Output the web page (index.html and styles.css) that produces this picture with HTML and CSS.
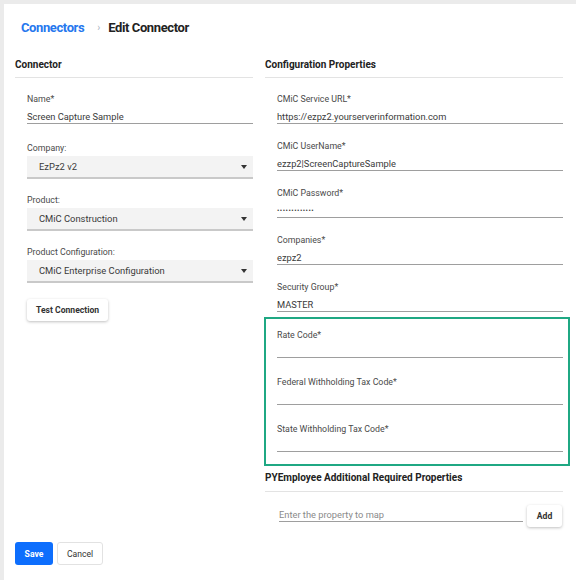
FILE: index.html
```html
<!DOCTYPE html>
<html lang="en">
<head>
  <meta charset="UTF-8" />
  <title>Edit Connector</title>
  <link rel="stylesheet" href="styles.css">
</head>
<body>
  <div class="page">

    <div class="crumbs">
      <a class="crumb-link" href="#">Connectors</a>
      <span class="crumb-sep">&rsaquo;</span>
      <span class="crumb-current">Edit Connector</span>
    </div>

    <div class="columns">
      <!-- Connector -->
      <section class="col col-left">
        <h4 class="section-title">Connector</h4>
        <div class="fields">
          <div class="field">
            <div class="label">Name*</div>
            <div class="value">Screen Capture Sample</div>
          </div>
          <div class="field">
            <div class="label">Company:</div>
            <div class="select">EzPz2 v2<span class="caret"></span></div>
          </div>
          <div class="field">
            <div class="label">Product:</div>
            <div class="select">CMiC Construction<span class="caret"></span></div>
          </div>
          <div class="field">
            <div class="label">Product Configuration:</div>
            <div class="select">CMiC Enterprise Configuration<span class="caret"></span></div>
          </div>
          <button class="btn btn-raised">Test Connection</button>
        </div>
      </section>

      <!-- Configuration Properties -->
      <section class="col col-right">
        <h4 class="section-title">Configuration Properties</h4>
        <div class="fields">
          <div class="field">
            <div class="label">CMiC Service URL*</div>
            <div class="value">https://ezpz2.yourserverinformation.com</div>
          </div>
          <div class="field">
            <div class="label">CMiC UserName*</div>
            <div class="value">ezzp2|ScreenCaptureSample</div>
          </div>
          <div class="field">
            <div class="label">CMiC Password*</div>
            <div class="value dots">&bull;&bull;&bull;&bull;&bull;&bull;&bull;&bull;&bull;&bull;&bull;&bull;&bull;</div>
          </div>
          <div class="field">
            <div class="label">Companies*</div>
            <div class="value">ezpz2</div>
          </div>
          <div class="field">
            <div class="label">Security Group*</div>
            <div class="value">MASTER</div>
          </div>

          <div class="highlight">
            <div class="field">
              <div class="label">Rate Code*</div>
              <div class="value"></div>
            </div>
            <div class="field">
              <div class="label">Federal Withholding Tax Code*</div>
              <div class="value"></div>
            </div>
            <div class="field">
              <div class="label">State Withholding Tax Code*</div>
              <div class="value"></div>
            </div>
          </div>
        </div>

        <h4 class="section-title extra-title">PYEmployee Additional Required Properties</h4>
        <div class="add-row">
          <div class="value placeholder">Enter the property to map</div>
          <button class="btn btn-raised btn-add">Add</button>
        </div>
      </section>
    </div>

    <div class="actions">
      <button class="btn btn-primary">Save</button>
      <button class="btn btn-outline">Cancel</button>
    </div>

  </div>
</body>
</html>
```

FILE: styles.css
```css
html, body {
  margin: 0;
  padding: 0;
}

body {
  background-color: #ebebeb;
  font-family: Roboto, "Liberation Sans", Arial, sans-serif;
  color: #333;
}

.page {
  margin: 4px 0 0 4px;
  background-color: #fff;
  min-height: 576px;
  padding: 13px 13px 0 11px;
  box-sizing: border-box;
}

/* Breadcrumb */
.crumbs {
  display: flex;
  align-items: center;
  height: 20px;
  padding-left: 6px;
}

.crumb-link {
  color: #2577ee;
  font-size: 13px;
  letter-spacing: -0.4px;
  font-weight: bold;
  text-decoration: none;
}

.crumb-sep {
  color: #aab4c0;
  font-size: 10px;
  margin: 0 8px 0 13px;
}

.crumb-current {
  color: #222;
  font-size: 13px;
  letter-spacing: -0.4px;
  font-weight: bold;
}

/* Columns */
.columns {
  display: grid;
  grid-template-columns: 238px 298px;
  column-gap: 12px;
  margin-top: 21px;
}

.section-title {
  margin: 0;
  font-size: 10px;
  line-height: 14px;
  font-weight: bold;
  color: #222;
  padding-bottom: 5px;
  border-bottom: 1px solid #e3e3e3;
}

.fields {
  padding: 15px 0 0 12px;
}

.field {
  margin-bottom: 16px;
}

.label {
  font-size: 8.8px;
  line-height: 12px;
  color: #4a4a4a;
}

.value {
  font-size: 9.3px;
  line-height: 12px;
  height: 12px;
  margin-top: 6px;
  color: #3a3a3a;
  border-bottom: 1px solid #9e9e9e;
}

.dots {
  font-size: 7px;
  letter-spacing: 0.5px;
}

/* Selects */
.select {
  position: relative;
  margin-top: 2px;
  height: 21px;
  line-height: 21px;
  padding-left: 12px;
  background-color: #f3f3f3;
  border-bottom: 2px solid #c9c9c9;
  font-size: 9.4px;
  color: #3a3a3a;
}

.caret {
  position: absolute;
  right: 6px;
  top: 9px;
  border-left: 3px solid transparent;
  border-right: 3px solid transparent;
  border-top: 4px solid #333;
}

.col-left .field {
  margin-bottom: 15px;
}

.col-left .field:first-child {
  margin-bottom: 18px;
}

/* Highlight box */
.highlight {
  margin: -11px -7px 0 -13px;
  padding: 10px 5px 12px 11px;
  border: 2px solid #1fa883;
}

.highlight .field {
  margin-bottom: 18px;
}

.highlight .field:last-child {
  margin-bottom: 0;
}

.highlight .value {
  margin-top: 4px;
}

.extra-title {
  margin-top: 5px;
  padding-bottom: 6px;
}

.add-row {
  display: flex;
  align-items: flex-end;
  padding: 11px 1px 0 14px;
  gap: 4px;
}

.add-row .value {
  flex: 1;
  margin-bottom: 5px;
}

.placeholder {
  color: #8a8a8a;
}

/* Buttons */
.btn {
  font-family: Roboto, "Liberation Sans", Arial, sans-serif;
  font-size: 8.6px;
  font-weight: bold;
  cursor: pointer;
  border-radius: 3px;
  border: none;
}

.btn-raised {
  background-color: #fff;
  color: #333;
  height: 22px;
  padding: 0 9px;
  box-shadow: 0 1px 3px rgba(0, 0, 0, 0.25);
}

.btn-add {
  width: 35px;
  padding: 0;
}

.actions {
  display: flex;
  gap: 4px;
  margin-top: 15px;
}

.btn-primary {
  background-color: #0d6efd;
  color: #fff;
  height: 23px;
  width: 38px;
  padding: 0;
}

.btn-outline {
  background-color: #fff;
  color: #333;
  border: 1px solid #e2e2e2;
  height: 23px;
  width: 46px;
  padding: 0;
  font-weight: normal;
}
```
